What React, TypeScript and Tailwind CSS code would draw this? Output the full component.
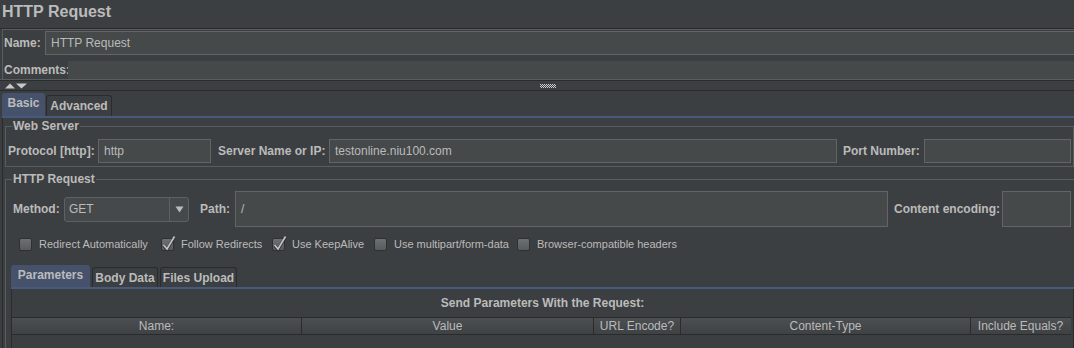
// JMeter "HTTP Request" sampler panel, Darcula look.
// Flow layout only: fieldsets carry the titled borders.

type Check = { label: string; checked: boolean; w: string };

const checks: Check[] = [
  { label: "Redirect Automatically", checked: false, w: "w-[142px]" },
  { label: "Follow Redirects", checked: true, w: "w-[111px]" },
  { label: "Use KeepAlive", checked: true, w: "w-[102px]" },
  { label: "Use multipart/form-data", checked: false, w: "w-[143px]" },
  { label: "Browser-compatible headers", checked: false, w: "w-[160px]" },
];

const columns = [
  { title: "Name:", w: "w-[290px]" },
  { title: "Value", w: "w-[292px]" },
  { title: "URL Encode?", w: "w-[87px]" },
  { title: "Content-Type", w: "w-[290px]" },
  { title: "Include Equals?", w: "w-[99px]" },
];

function Field({ w, value, h = "h-[24px]" }: { w: string; value?: string; h?: string }) {
  return (
    <div className={`${w} ${h} flex items-center border border-[#646464] bg-[#45494a] px-[5px] text-[12px]`}>
      {value}
    </div>
  );
}

function CheckBox({ checked }: { checked: boolean }) {
  return (
    <span className="relative flex h-[13px] w-[13px] shrink-0 rounded-[2px] border border-[#2e3032] bg-gradient-to-b from-[#6d7072] to-[#585b5d]">
      {checked && (
        <svg viewBox="0 0 13 13" className="h-[13px] w-[13px] overflow-visible" aria-hidden="true">
          <path d="M1.5 6.5 L5 10.5 L12.5 -2" fill="none" stroke="#2b2b2b" strokeWidth="2.8" />
          <path d="M1.5 6 L5 10 L12.5 -2.5" fill="none" stroke="#c4c4c4" strokeWidth="1.7" />
        </svg>
      )}
    </span>
  );
}

function Dots() {
  const cells = [];
  for (let r = 0; r < 4; r++) {
    for (let c = 0; c < 16; c++) {
      if ((c + r) % 2 === 0) cells.push(<rect key={`${r}-${c}`} x={c} y={r} width="1" height="1" fill="#d0d0d0" />);
    }
  }
  return (
    <svg width="16" height="4" viewBox="0 0 16 4" aria-hidden="true">
      {cells}
    </svg>
  );
}

export default function App() {
  return (
    <div className="h-[348px] w-[1074px] overflow-hidden bg-[#3c3f41] font-['Liberation_Sans',Arial,sans-serif] text-[#bbbbbb]">
      {/* Title */}
      <div className="h-[28px] pl-[2px] pt-[2px] text-[16px] font-bold leading-[20px]">HTTP Request</div>
      <div className="h-px bg-[#2b2b2b]" />

      {/* Name / Comments */}
      <div className="ml-[2px] border-l border-t border-[#5a5d5f] pt-[1px] text-[12px]">
        <div className="flex h-[24px] items-center">
          <span className="w-[42px] pl-[1px] font-bold">Name:</span>
          <div className="flex h-[24px] flex-1 items-center border border-r-0 border-[#646464] bg-[#45494a] px-[5px]">
            HTTP Request
          </div>
        </div>
        <div className="mt-[6px] flex h-[18px] items-center">
          <span className="w-[65px] pl-[1px] font-bold">Comments:</span>
          <div className="h-[18px] flex-1 bg-[#45494a]" />
        </div>
      </div>
      <div className="h-px bg-[#5a5d5f]" />
      <div className="h-px bg-[#2b2b2b]" />

      {/* Splitter */}
      <div className="flex h-[9px] items-center">
        <svg width="28" height="9" viewBox="0 0 28 9" aria-hidden="true">
          <path d="M5 7.5 L10 2.5 L15 7.5 Z" fill="#c8c8c8" />
          <path d="M16 2.5 L27 2.5 L21.5 7.5 Z" fill="#c8c8c8" />
        </svg>
        <div className="flex flex-1 justify-center pr-[6px]">
          <Dots />
        </div>
      </div>
      <div className="h-px bg-[#2b2b2b]" />

      {/* Basic / Advanced tabs */}
      <div className="ml-[2px]">
        <div className="flex h-[25px] items-end gap-px text-[12px] font-bold leading-[14px]">
          <div className="h-[23px] w-[43px] rounded-t-[3px] bg-[#46526b] pt-[3px] text-center">Basic</div>
          <div className="h-[21px] w-[66px] rounded-t-[3px] border border-b-0 border-[#2b2b2b] pt-[3px] text-center">
            Advanced
          </div>
        </div>
        <div className="h-[2px] bg-[#485a7b]" />

        <div className="border-l border-[#2b2b2b] pl-[2px] pt-px">
          {/* Web Server */}
          <fieldset className="border border-[#5a5d5f] pb-[3px] pl-[2px] pr-px">
            <legend className="ml-[4px] px-px text-[12px] font-bold leading-[14px]">Web Server</legend>
            <div className="mt-[6px] flex h-[24px] items-center text-[12px]">
              <span className="w-[90px] font-bold">Protocol [http]:</span>
              <Field w="w-[113px]" value="http" />
              <span className="w-[118px] pl-[7px] font-bold">Server Name or IP:</span>
              <Field w="w-[508px]" value="testonline.niu100.com" />
              <span className="w-[87px] pl-[6px] font-bold">Port Number:</span>
              <Field w="w-[147px]" />
            </div>
          </fieldset>

          {/* HTTP Request */}
          <fieldset className="mt-[5px] border border-[#5a5d5f] pl-[2px] pr-px">
            <legend className="ml-[4px] px-px text-[12px] font-bold leading-[14px]">HTTP Request</legend>
            <div className="mt-[5px] flex h-[36px] items-center text-[12px]">
              <span className="w-[56px] pl-[5px] font-bold">Method:</span>
              <div className="flex h-[25px] w-[125px] items-stretch rounded-[3px] border border-[#5e6162] bg-[#45494a]">
                <span className="flex flex-1 items-center pl-[4px]">GET</span>
                <span className="flex w-[19px] items-center justify-center border-l border-[#5e6162]">
                  <svg width="9" height="7" viewBox="0 0 9 7" aria-hidden="true">
                    <path d="M0.5 0.5 L8.5 0.5 L4.5 6.5 Z" fill="#bbbbbb" />
                  </svg>
                </span>
              </div>
              <span className="w-[46px] pl-[11px] font-bold">Path:</span>
              <Field w="w-[653px]" h="h-[36px]" value="/" />
              <span className="w-[114px] pl-[6px] font-bold">Content encoding:</span>
              <Field w="w-[69px]" h="h-[36px]" />
            </div>

            <div className="mt-[11px] flex h-[13px] items-center pl-[11px] text-[11px]">
              {checks.map((c) => (
                <label key={c.label} className={`${c.w} flex shrink-0 items-center gap-[7px] whitespace-nowrap`}>
                  <CheckBox checked={c.checked} />
                  <span>{c.label}</span>
                </label>
              ))}
            </div>

            {/* Parameters / Body Data / Files Upload */}
            <div className="ml-[3px] mt-[14px] w-[1063px]">
              <div className="flex h-[22px] items-end gap-[2px] text-[12px] font-bold leading-[14px]">
                <div className="h-[22px] w-[79px] rounded-t-[3px] bg-[#46526b] pt-[3px] text-center">Parameters</div>
                <div className="h-[20px] w-[66px] rounded-t-[3px] border border-b-0 border-[#2b2b2b] pt-[3px] text-center">
                  Body Data
                </div>
                <div className="h-[20px] w-[77px] rounded-t-[3px] border border-b-0 border-[#2b2b2b] pt-[3px] text-center">
                  Files Upload
                </div>
              </div>
              <div className="h-[2px] bg-[#485a7b]" />
              <div className="h-[60px] border-x border-[#2b2b2b]">
                <div className="pt-[7px] text-center text-[12px] font-bold leading-[14px]">
                  Send Parameters With the Request:
                </div>
                <div className="mr-[2px] mt-[7px] flex h-[18px] border-y border-[#2b2b2b] bg-gradient-to-b from-[#4c4f51] to-[#3f4244] text-[12px]">
                  {columns.map((col, i) => (
                    <div
                      key={col.title}
                      className={`${col.w} flex items-center justify-center ${i < columns.length - 1 ? "border-r border-[#2b2b2b]" : ""}`}
                    >
                      {col.title}
                    </div>
                  ))}
                </div>
              </div>
            </div>
          </fieldset>
        </div>
      </div>
    </div>
  );
}
